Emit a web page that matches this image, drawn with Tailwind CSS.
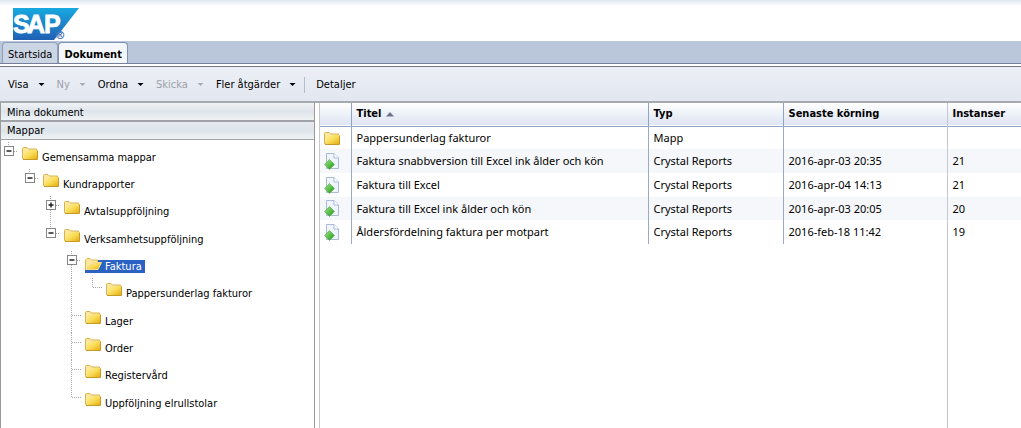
<!DOCTYPE html>
<html lang="sv">
<head>
<meta charset="utf-8">
<title>Dokument</title>
<script src="https://cdn.jsdelivr.net/npm/@tailwindcss/browser@4"></script>
</head>
<body class="min-h-screen flex flex-col bg-white text-black text-[11px] leading-4 font-['DejaVu_Sans_Condensed','DejaVu_Sans',sans-serif]">
<svg width="0" height="0" class="absolute" aria-hidden="true">
  <defs>
    <linearGradient id="gold" x1="0" y1="0" x2="1" y2="1"><stop offset="0" stop-color="#fff0a0"/><stop offset=".5" stop-color="#f9dc58"/><stop offset="1" stop-color="#e3ad10"/></linearGradient>
    <linearGradient id="green" x1="0" y1="0" x2="1" y2="1"><stop offset="0" stop-color="#a4e88a"/><stop offset="1" stop-color="#1c9414"/></linearGradient>
    <linearGradient id="sap" x1="0" y1="0" x2="0" y2="1"><stop offset="0" stop-color="#18a9e0"/><stop offset="1" stop-color="#2060b4"/></linearGradient>
    <symbol id="folder" viewBox="0 0 16 14">
      <path d="M.5 12.500V2.500Q.5 1.500 1.500 1.500H5L6.500 3H14.500V12.500Z" fill="#fbe7a0" stroke="#d9b24c"/>
      <path d="M2.500 5H5.500L7 4H15.500V13H1.500Z" fill="url(#gold)"/>
      <path d="M1 13.500H15.500V4.500" fill="none" stroke="#c79a28"/>
    </symbol>
    <symbol id="folder-open" viewBox="0 0 17 14">
      <path d="M.5 12V3L2 1.500H5L6.500 3H12.500V6H9L1 13Z" fill="#fbe7a0" stroke="#e0b850"/>
      <path d="M1 12.500 4 8.500 7.500 7.500 9.500 5.500H16.500L13 12.500Z" fill="url(#gold)" stroke="#f6dc84"/>
    </symbol>
    <symbol id="report" viewBox="0 0 16 17">
      <path d="M2.500.500H10L14.500 5V15.500H2.500Z" fill="#f0f4fb" stroke="#a9bbd9"/>
      <path d="M10 .500V5H14.500" fill="#fff" stroke="#a9bbd9"/>
      <path d="M5.500 6.500 10.500 11.500 5.500 16.500 .5 11.500Z" fill="url(#green)" stroke="#58b548" stroke-width=".7"/>
    </symbol>
    <symbol id="minus" viewBox="0 0 10 10"><rect x=".5" y=".5" width="9" height="9" fill="#fff" stroke="#868686"/><path d="M2.500 5H7.500" stroke="#222" stroke-width="1.500"/></symbol>
    <symbol id="plus" viewBox="0 0 10 10"><rect x=".5" y=".5" width="9" height="9" fill="#fff" stroke="#868686"/><path d="M2.500 5H7.500M5 2.500V7.500" stroke="#222" stroke-width="1.500"/></symbol>
  </defs>
</svg>

<header class="h-[41px] shrink-0 pt-2 pl-[13px] bg-linear-to-b from-[#dfe5ef] from-0% to-white to-15%">
  <svg width="66" height="33" viewBox="0 0 66 33" class="overflow-visible" role="img" aria-label="SAP">
    <path d="M0 0H66L41 32H0Z" fill="url(#sap)"/>
    <text x="0 14 31" y="25" font-family="Liberation Sans" font-weight="bold" font-size="25" fill="#fff" stroke="#fff" stroke-width=".8">SAP<tspan x="43" y="31" font-size="11" font-weight="normal" fill="#4a78b8" stroke="#4a78b8" stroke-width=".3">®</tspan></text>
  </svg>
</header>

<nav class="h-[23px] shrink-0 flex items-end bg-[#bac6d9] border-b border-[#76809a] pl-[2px]">
  <a href="#" class="h-[21px] px-[5px] pt-1 rounded-t-sm border border-b-0 border-[#8fa0bd] bg-[#ccd5e3]">Startsida</a>
  <a href="#" aria-current="page" class="h-[21px] px-[5px] pt-1 rounded-t-sm border border-b-0 border-[#7f93b5] bg-[#f3f6fa] font-bold">Dokument</a>
</nav>

<div role="toolbar" class="mt-[2px] h-[37px] shrink-0 flex items-center px-2 pt-[2px] border-t border-b-2 border-t-[#77777f] border-b-[#a5a9b0] bg-linear-to-b from-[#eceff5] to-[#e2e7f0]">
  <button class="flex items-center gap-[9px] mr-3">Visa<svg width="7" height="4" viewBox="0 0 7 4"><path d="M.5 0H6.500L3.500 3Z"/></svg></button>
  <button disabled class="flex items-center gap-[9px] mr-3 text-[#9ea1a8]">Ny<svg width="7" height="4" viewBox="0 0 7 4" fill="#a8abb2"><path d="M.5 0H6.500L3.500 3Z"/></svg></button>
  <button class="flex items-center gap-[9px] mr-3">Ordna<svg width="7" height="4" viewBox="0 0 7 4"><path d="M.5 0H6.500L3.500 3Z"/></svg></button>
  <button disabled class="flex items-center gap-[9px] mr-3 text-[#9ea1a8]">Skicka<svg width="7" height="4" viewBox="0 0 7 4" fill="#a8abb2"><path d="M.5 0H6.500L3.500 3Z"/></svg></button>
  <button class="flex items-center gap-[9px] mr-2">Fler åtgärder<svg width="7" height="4" viewBox="0 0 7 4"><path d="M.5 0H6.500L3.500 3Z"/></svg></button>
  <span class="w-px h-4 bg-[#b3bdd0] mr-[11px]"></span>
  <button>Detaljer</button>
</div>

<div class="flex-1 flex">
  <aside class="w-[315px] shrink-0 border-x border-[#9a9a9a]">
    <button class="block w-full h-[19px] px-[6px] pt-[2px] text-left border-b-2 border-[#a0a4a8] bg-linear-to-b from-[#f0f3f6] via-[#dde4ea] to-[#f0f3f5]">Mina dokument</button>
    <button class="block w-full h-[18px] px-[6px] pt-px text-left border-b border-[#a0a4a8] bg-linear-to-b from-[#e4eaef] via-[#dde4ea] to-[#f0f3f5]">Mappar</button>
    <ul role="tree" class="pt-[2px] [&>li]:flex [&>li]:h-[27px] [&>li:nth-child(3n)]:h-[28px] [&_span]:mt-2 [&_span]:h-4 [&_span]:px-1">
      <li role="treeitem" aria-level="1"><svg width="21" height="28" fill="none" stroke="#a8a8a8" stroke-dasharray="1 1"><path d="M7.500 0V4M13 9.500H17"/><use href="#minus" x="3" y="4" width="10" height="10" stroke-dasharray="none"/></svg><svg width="16" height="14" class="mt-1"><use href="#folder"/></svg><span>Gemensamma mappar</span></li>
      <li role="treeitem" aria-level="2"><svg width="42" height="28" fill="none" stroke="#a8a8a8" stroke-dasharray="1 1"><path d="M28.500 0V4M34 9.500H38"/><use href="#minus" x="24" y="4" width="10" height="10" stroke-dasharray="none"/></svg><svg width="16" height="14" class="mt-1"><use href="#folder"/></svg><span>Kundrapporter</span></li>
      <li role="treeitem" aria-level="3"><svg width="63" height="28" fill="none" stroke="#a8a8a8" stroke-dasharray="1 1"><path d="M49.500 0V28M55 9.500H59"/><use href="#plus" x="45" y="4" width="10" height="10" stroke-dasharray="none"/></svg><svg width="16" height="14" class="mt-1"><use href="#folder"/></svg><span>Avtalsuppföljning</span></li>
      <li role="treeitem" aria-level="3"><svg width="63" height="28" fill="none" stroke="#a8a8a8" stroke-dasharray="1 1"><path d="M49.500 0V4M55 9.500H59"/><use href="#minus" x="45" y="4" width="10" height="10" stroke-dasharray="none"/></svg><svg width="16" height="14" class="mt-1"><use href="#folder"/></svg><span>Verksamhetsuppföljning</span></li>
      <li role="treeitem" aria-level="4" aria-selected="true"><svg width="84" height="27" fill="none" stroke="#a8a8a8" stroke-dasharray="1 1"><path d="M70.500 0V27M76 9.500H80"/><use href="#minus" x="66" y="4" width="10" height="10" stroke-dasharray="none"/></svg><div class="flex mt-[9px] h-[13px] bg-[#2a62c4] text-white leading-[14px]"><svg width="17" height="14" class="-mt-[3px]"><use href="#folder-open"/></svg><b class="font-normal px-[3px]">Faktura</b></div></li>
      <li role="treeitem" aria-level="5"><svg width="105" height="28" fill="none" stroke="#a8a8a8" stroke-dasharray="1 1"><path d="M70.500 0V28M91.500 0V9.500H101"/></svg><svg width="16" height="14" class="mt-1"><use href="#folder"/></svg><span>Pappersunderlag fakturor</span></li>
      <li role="treeitem" aria-level="4"><svg width="84" height="27" fill="none" stroke="#a8a8a8" stroke-dasharray="1 1"><path d="M70.500 0V27M71 9.500H80"/></svg><svg width="16" height="14" class="mt-1"><use href="#folder"/></svg><span>Lager</span></li>
      <li role="treeitem" aria-level="4"><svg width="84" height="27" fill="none" stroke="#a8a8a8" stroke-dasharray="1 1"><path d="M70.500 0V27M71 9.500H80"/></svg><svg width="16" height="14" class="mt-1"><use href="#folder"/></svg><span>Order</span></li>
      <li role="treeitem" aria-level="4"><svg width="84" height="28" fill="none" stroke="#a8a8a8" stroke-dasharray="1 1"><path d="M70.500 0V28M71 9.500H80"/></svg><svg width="16" height="14" class="mt-1"><use href="#folder"/></svg><span>Registervård</span></li>
      <li role="treeitem" aria-level="4"><svg width="84" height="27" fill="none" stroke="#a8a8a8" stroke-dasharray="1 1"><path d="M70.500 0V9.500H80"/></svg><svg width="16" height="14" class="mt-1"><use href="#folder"/></svg><span>Uppföljning elrullstolar</span></li>
    </ul>
  </aside>

  <main class="flex-1 ml-1 border-l border-[#c8c8c8] flex flex-col">
    <table class="w-full table-fixed border-collapse text-left">
      <colgroup><col class="w-[31px]"><col class="w-[297px]"><col class="w-[135px]"><col class="w-[164px]"><col></colgroup>
      <thead>
        <tr class="h-[23px] bg-linear-to-b from-white to-[#dde4f1] border-b border-[#8fa3c4] [&>th]:pl-[5px] [&>th]:border-l [&>th]:border-[#8fa3c4] [&>th:last-child]:border-[#c4c8d0]">
          <td aria-label="Typikon"></td>
          <th><div class="flex items-center gap-[5px]">Titel<svg width="8" height="5" viewBox="0 0 8 5"><path d="M0 4.500H8L4 0Z" fill="#6d7488"/></svg></div></th>
          <th>Typ</th><th>Senaste körning</th><th>Instanser</th>
        </tr>
      </thead>
      <tbody class="font-['Noto_Sans',sans-serif] [&>tr]:h-[24px] [&>tr:first-child]:h-[23px] [&>tr:nth-child(4)]:h-[23px] [&>tr:nth-child(even)]:bg-[#f5f7fa] [&_td]:pl-[5px] [&_td:first-child]:pl-1 [&_td+td]:border-l [&_td+td]:border-[#9aaac4] [&_td:last-child]:border-[#c4c8d0]">
        <tr><td><svg width="16" height="14"><use href="#folder"/></svg></td><td>Pappersunderlag fakturor</td><td>Mapp</td><td></td><td></td></tr>
        <tr><td><svg width="16" height="17"><use href="#report"/></svg></td><td>Faktura snabbversion till Excel ink ålder och kön</td><td>Crystal Reports</td><td>2016-apr-03 20:35</td><td>21</td></tr>
        <tr><td><svg width="16" height="17"><use href="#report"/></svg></td><td>Faktura till Excel</td><td>Crystal Reports</td><td>2016-apr-04 14:13</td><td>21</td></tr>
        <tr><td><svg width="16" height="17"><use href="#report"/></svg></td><td>Faktura till Excel ink ålder och kön</td><td>Crystal Reports</td><td>2016-apr-03 20:05</td><td>20</td></tr>
        <tr><td><svg width="16" height="17"><use href="#report"/></svg></td><td>Åldersfördelning faktura per motpart</td><td>Crystal Reports</td><td>2016-feb-18 11:42</td><td>19</td></tr>
      </tbody>
    </table>
    <div class="flex-1 ml-[627px] border-l border-[#c4c8d0]"></div>
  </main>
</div>
</body>
</html>
